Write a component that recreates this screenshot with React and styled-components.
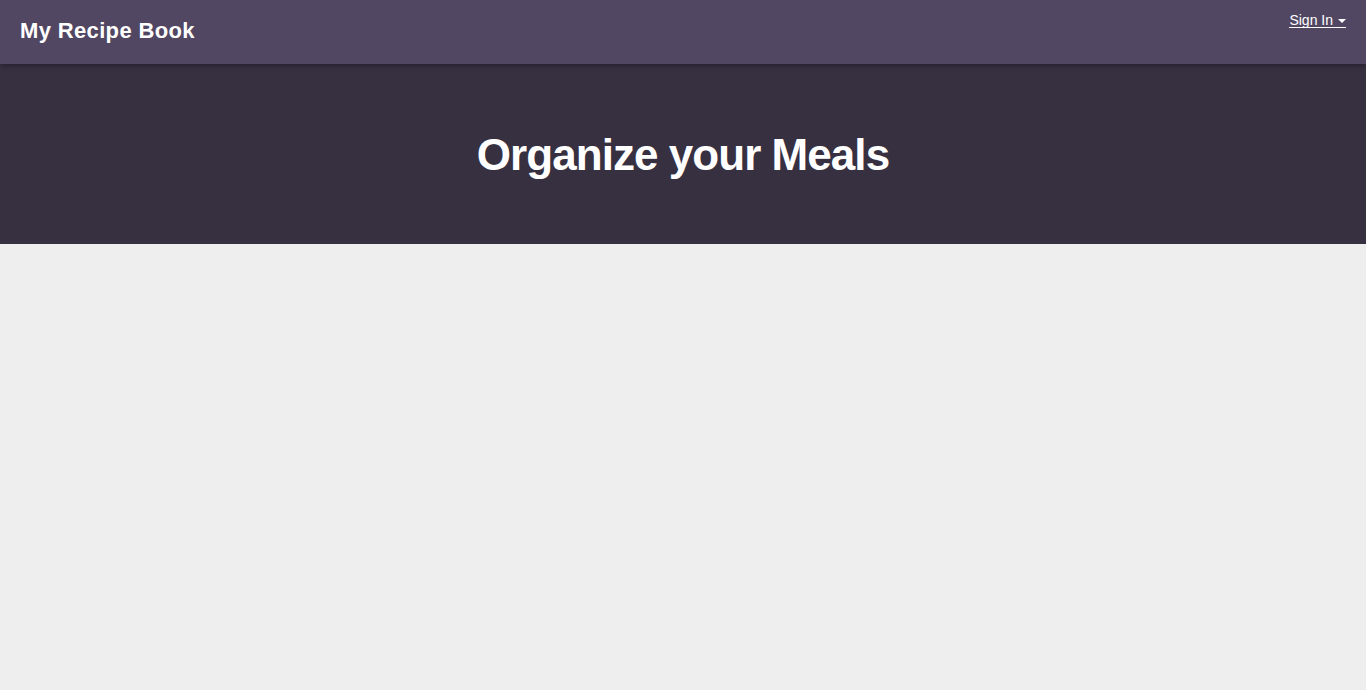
import React from 'react'
import styled, { createGlobalStyle } from 'styled-components'

const GlobalStyle = createGlobalStyle`
  html, body {
    margin: 0;
    padding: 0;
    background: #eeeeee;
    font-family: 'Liberation Sans', Arial, sans-serif;
  }
`

const Page = styled.div`
  min-height: 690px;
  background: #eeeeee;
`

const NavBar = styled.header`
  position: relative;
  z-index: 1;
  height: 64px;
  background: #524763;
  box-shadow: 0 2px 5px rgba(0, 0, 0, 0.3);
  display: flex;
  justify-content: space-between;
  align-items: flex-start;
  padding: 0 20px;
`

const Brand = styled.a`
  color: #ffffff;
  font-weight: bold;
  font-size: 22px;
  text-decoration: none;
  line-height: 22px;
  margin-top: 20px;
  letter-spacing: 0.35px;
`

const SignIn = styled.a`
  color: #ffffff;
  font-size: 14px;
  line-height: 14px;
  margin-top: 13px;
  padding-bottom: 0;
  border-bottom: 1px solid #ffffff;
  display: inline-flex;
  align-items: center;
  gap: 5px;
  cursor: pointer;
`

const Caret = styled.span`
  display: inline-block;
  width: 0;
  height: 0;
  border-left: 4px solid transparent;
  border-right: 4px solid transparent;
  border-top: 4px solid #ffffff;
  margin-top: 2px;
`

const Hero = styled.section`
  height: 180px;
  background: #373041;
  display: flex;
  justify-content: center;
  align-items: center;
`

const Title = styled.h1`
  margin: 0;
  color: #ffffff;
  font-size: 44px;
  font-weight: bold;
  letter-spacing: -0.95px;
  padding-top: 2px;
`

const App = () => (
  <Page>
    <GlobalStyle />
    <NavBar>
      <Brand>My Recipe Book</Brand>
      <SignIn>
        Sign In
        <Caret />
      </SignIn>
    </NavBar>
    <Hero>
      <Title>Organize your Meals</Title>
    </Hero>
  </Page>
)

export default App
